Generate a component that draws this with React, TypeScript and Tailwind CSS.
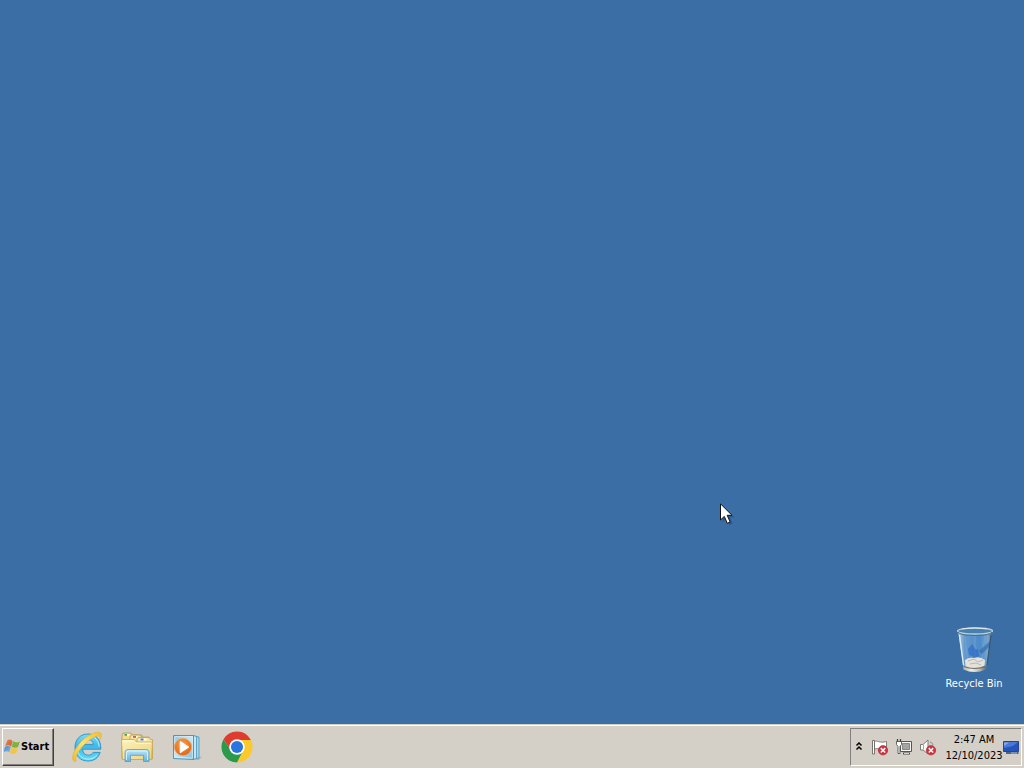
import type { ReactNode } from "react";

function WindowsFlag() {
  return (
    <svg width="16" height="16" viewBox="0 0 16 16" aria-hidden="true">
      <defs>
        <linearGradient id="flagRed" x1="0" y1="0" x2="1" y2="1">
          <stop offset="0" stopColor="#d98a5c" />
          <stop offset="1" stopColor="#dd5520" />
        </linearGradient>
        <linearGradient id="flagBlue" x1="0" y1="0" x2="1" y2="1">
          <stop offset="0" stopColor="#4f86c4" />
          <stop offset="1" stopColor="#7db9ec" />
        </linearGradient>
      </defs>
      <path d="M3.2 1.4C5 .2 6.7.4 8.6 1.9L7 7.4C5.2 6 3.4 6 1.3 7.1Z" fill="url(#flagRed)" />
      <path d="M9.2 2.3C11.2 3.7 13.2 3.6 15.8 2.4L14.1 8C11.6 9.2 9.6 9 7.6 7.7Z" fill="#7fb144" />
      <path d="M1 7.8C3 6.8 4.9 6.8 6.8 8.1L5.3 13.2C3.5 11.9 1.6 11.9-.4 12.9Z" fill="url(#flagBlue)" />
      <path d="M7.4 8.4C9.4 9.8 11.4 9.9 13.9 8.7L12.4 14C10 15.2 7.8 15.1 5.8 13.7Z" fill="#f2c548" />
    </svg>
  );
}

function ExplorerLogo() {
  return (
    <svg width="32" height="32" viewBox="0 0 32 32" aria-hidden="true">
      <defs>
        <linearGradient id="ieBlue" x1="0" y1="0" x2="0" y2="1">
          <stop offset="0" stopColor="#7fdcf7" />
          <stop offset=".45" stopColor="#41b8e8" />
          <stop offset="1" stopColor="#63dcf8" />
        </linearGradient>
        <linearGradient id="ieGold" x1="1" y1="0" x2="0" y2="1">
          <stop offset="0" stopColor="#f0bd2c" />
          <stop offset=".5" stopColor="#fde36c" />
          <stop offset="1" stopColor="#f0b92a" />
        </linearGradient>
      </defs>
      <path
        fillRule="evenodd"
        d="M17 3C25 3 30 8.6 29.8 18.2H11.6C11.9 22 14 24.2 17.4 24.2C19.6 24.2 21.2 23.2 22.1 21.4H29.2C27.3 27 23 30 17 30C9.2 30 4 24.6 4 16.6C4 8.6 9.2 3 17 3ZM11.8 13.4H22.4C22.1 10.3 20.1 8.6 17.2 8.6C14.1 8.6 12.2 10.3 11.8 13.4Z"
        fill="url(#ieBlue)"
        stroke="#2790c4"
        strokeWidth=".9"
      />
      <path d="M23.5 6.6C26.2 8.6 27.9 11.7 28.2 15.8M6.8 21C8.5 25.4 12.2 28 17 28.1C20.9 28.1 24 26.6 26 23.8" fill="none" stroke="#b9f2fd" strokeWidth="1" />
      <path
        d="M28.4 9.6C29.8 5.9 28.6 4.2 25.2 5.2C19.2 7.2 11.2 14.5 7 21.5C4.9 25 4.2 27.7 5.2 30.2C3.1 31.2 1.4 29.7 1.5 26.5C1.7 20.4 8.7 10.5 16.4 5.4C22.4 1.3 28.4-.2 30 2.6C30.9 4.3 30.2 6.8 28.4 9.6Z"
        fill="url(#ieGold)"
        stroke="#dfa92b"
        strokeWidth=".4"
      />
    </svg>
  );
}

function FolderLogo() {
  return (
    <svg width="34" height="32" viewBox="0 0 34 32" aria-hidden="true">
      <defs>
        <linearGradient id="folderFront" x1="0" y1="0" x2="1" y2="1">
          <stop offset="0" stopColor="#fdf3bd" />
          <stop offset="1" stopColor="#ecd27c" />
        </linearGradient>
        <linearGradient id="folderStand" x1="0" y1="0" x2="0" y2="1">
          <stop offset="0" stopColor="#bce6f8" />
          <stop offset="1" stopColor="#64b0dc" />
        </linearGradient>
      </defs>
      <path d="M2 4L3 2H11L12.5 4H22V28H2Z" fill="#f4dc8c" stroke="#b79847" strokeWidth=".8" />
      <path d="M10 6L11 4H20L21.5 6H29V28H10Z" fill="#f6e09a" stroke="#bfa04c" strokeWidth=".8" />
      <path d="M17 8.5L18 6.5H29L30.5 8.5H32.5V28H17Z" fill="#f8e5a5" stroke="#bfa04c" strokeWidth=".8" />
      <rect x="4.5" y="3" width="5" height="1.8" fill="#fff" />
      <rect x="4.5" y="3" width="2.5" height="1.8" fill="#43a15c" />
      <rect x="12.5" y="5" width="5" height="1.8" fill="#fff" />
      <rect x="13" y="5" width="3" height="1.8" fill="#c9603a" />
      <rect x="19.5" y="7.5" width="7" height="2" fill="#fff" />
      <rect x="20.5" y="7.5" width="3" height="2" fill="#4a83c4" />
      <path d="M1.5 8.5H14L16.5 11H32.5L31.5 28.5H2.5Z" fill="url(#folderFront)" stroke="#c8a754" strokeWidth=".8" />
      <path d="M3 9.8H13.5L16 12.2H31" fill="none" stroke="#fffbe0" strokeWidth="1" />
      <path d="M5 22C5 19.5 6 18.5 8.5 18.5H25.5C28 18.5 29 19.5 29 22V30.5H23.5V24.3H10.5V30.5H5Z" fill="url(#folderStand)" stroke="#559ac4" strokeWidth=".8" />
      <path d="M6.4 29V22Q6.4 20 8.7 20H25.3Q27.6 20 27.6 22V29" fill="none" stroke="#e1f6fe" strokeWidth=".9" />
    </svg>
  );
}

function MediaPlayerLogo() {
  return (
    <svg width="32" height="32" viewBox="0 0 32 32" aria-hidden="true">
      <defs>
        <linearGradient id="mediaPanel" x1="0" y1="0" x2="1" y2="1">
          <stop offset="0" stopColor="#8dc3df" />
          <stop offset=".5" stopColor="#c5e4f1" />
          <stop offset="1" stopColor="#7db9d9" />
        </linearGradient>
        <radialGradient id="mediaOrange" cx=".45" cy=".35" r=".7">
          <stop offset="0" stopColor="#fba04b" />
          <stop offset="1" stopColor="#dd600f" />
        </radialGradient>
      </defs>
      <path d="M24 28.5L31.5 25L28 29Z" fill="#b5b2aa" />
      <path d="M23 5L28 6V27L23 28Z" fill="#a7d6eb" stroke="#4b94bb" strokeWidth=".8" />
      <path d="M22 4.5L25.5 5.4V27.6L22 28.5Z" fill="#c4e7f5" stroke="#4b94bb" strokeWidth=".8" />
      <path d="M2.5 4.5H22.5V28.5L2.5 27.5Z" fill="url(#mediaPanel)" stroke="#4d97bc" strokeWidth="1" />
      <path d="M3.7 5.7H21.3V27.2L3.7 26.3Z" fill="none" stroke="#e6f7fc" strokeWidth=".7" />
      <circle cx="12" cy="16" r="8.6" fill="url(#mediaOrange)" stroke="#eba467" strokeWidth=".8" />
      <path d="M9.2 10.4L17.8 16L9.2 21.8Z" fill="#fff" stroke="#fff" strokeWidth="1" strokeLinejoin="round" />
    </svg>
  );
}

function ChromeLogo() {
  return (
    <svg width="34" height="34" viewBox="0 0 48 48" aria-hidden="true">
      <path d="M24 14H43.6A22 22 0 0 0 4.95 13L15.34 29A10 10 0 0 1 24 14Z" fill="#df3c30" />
      <path d="M24 14H43.6A22 22 0 0 1 24 46L32.66 29A10 10 0 0 0 24 14Z" fill="#fbc92b" />
      <path d="M15.34 29L4.95 13A22 22 0 0 0 24 46L32.66 29A10 10 0 0 1 15.34 29Z" fill="#2b9a4a" />
      <circle cx="24" cy="24" r="11" fill="#fff" />
      <circle cx="24" cy="24" r="8.6" fill="#2a74e0" />
    </svg>
  );
}

function RedCross({ x, y }: { x: number; y: number }) {
  return (
    <g>
      <circle cx={x} cy={y} r="4.7" fill="#cf3340" stroke="#a92631" strokeWidth=".6" />
      <path d={`M${x - 2.2} ${y - 2.2}l4.4 4.4m0-4.4l-4.4 4.4`} stroke="#fff" strokeWidth="1.5" />
    </g>
  );
}

function ActionCenterIcon() {
  return (
    <svg width="18" height="18" viewBox="0 0 18 18" aria-hidden="true">
      <path d="M3.5 3.5C6 2 8.5 5.5 15.5 3.5V11C10 12.5 7.5 9.5 3.5 11Z" fill="#fff" stroke="#76746f" strokeWidth=".9" />
      <path d="M1.5 2.5H3.5V16H1.5Z" fill="#fff" stroke="#696762" strokeWidth=".9" />
      <RedCross x={12} y={12.3} />
    </svg>
  );
}

function NetworkIcon() {
  return (
    <svg width="18" height="18" viewBox="0 0 18 18" aria-hidden="true">
      <path d="M5.5 3.5H16.5V13.5H5.5Z" fill="#f5f5f3" stroke="#555553" />
      <path d="M7.5 5.5H14.5V11.5H7.5Z" fill="#a5a6a4" stroke="#737573" strokeWidth=".8" />
      <path d="M8 15.5H15" stroke="#4c4c4a" strokeWidth="2" />
      <path d="M9 15.5H14" stroke="#f0f0ee" strokeWidth=".8" />
      <path d="M1.5 3.5H6.5V6.5L5 8.5V15.5H3V8.5L1.5 6.5Z" fill="#fff" stroke="#555652" strokeWidth=".9" />
      <path d="M2.5 1V4M5.5 1V4" stroke="#444541" strokeWidth="1.3" />
    </svg>
  );
}

function SpeakerIcon() {
  return (
    <svg width="18" height="18" viewBox="0 0 18 18" aria-hidden="true">
      <path d="M1.5 6.5H4L9 2V16L4 12H1.5Z" fill="#f8f8f7" stroke="#71716d" strokeWidth=".9" />
      <path d="M4.5 7V11.5" stroke="#a8a8a3" />
      <path d="M11 4C12.9 4.5 13.9 5.7 14 7" fill="none" stroke="#8a8984" />
      <RedCross x={12} y={12.3} />
    </svg>
  );
}

function ShowDesktopIcon() {
  return (
    <svg width="16" height="16" viewBox="0 0 16 16" aria-hidden="true">
      <path d="M.5 2.5H15.5V12.5H.5Z" fill="#2454bd" stroke="#27458d" />
      <path d="M1 3H15L10 7L1 9Z" fill="#4d79d6" />
      <path d="M1 3.5H6L1 7Z" fill="#86a8ea" />
      <path d="M3 13H15.5V15H3Z" fill="#53657e" />
      <path d="M8 14H14" stroke="#a9bdd5" />
    </svg>
  );
}

function RecycleBinIcon() {
  return (
    <svg width="48" height="48" viewBox="0 0 48 48" aria-hidden="true">
      <defs>
        <linearGradient id="binGlass" x1="0" y1="0" x2="1" y2="0">
          <stop offset="0" stopColor="#c4dcec" stopOpacity=".9" />
          <stop offset=".2" stopColor="#6da3d6" stopOpacity=".8" />
          <stop offset=".65" stopColor="#528fcf" stopOpacity=".85" />
          <stop offset=".88" stopColor="#86b4dc" stopOpacity=".8" />
          <stop offset="1" stopColor="#4a6d8e" />
        </linearGradient>
        <linearGradient id="binBase" x1="0" y1="0" x2="1" y2="0">
          <stop offset="0" stopColor="#a7aeaa" />
          <stop offset=".35" stopColor="#f0f0e8" />
          <stop offset=".7" stopColor="#bbbeb8" />
          <stop offset="1" stopColor="#586471" />
        </linearGradient>
      </defs>
      <path d="M8 5L13.5 43Q25 48 36 43L42 5Q25 10 8 5Z" fill="url(#binGlass)" />
      <path d="M15 11L18 38M25 9V34M35 10L31 38" stroke="#76aadb" strokeWidth="1" opacity=".6" />
      <path d="M18 23L22 18L26 24L24 31L19 29ZM23 25L28 23L29 30L24 33Z" fill="#2b69c6" opacity=".65" />
      <path d="M40 15L29 25L32 28L39 21Z" fill="#2d64a3" opacity=".6" />
      <path d="M15 34Q19 31 24 32Q30 30 35 34L34.5 41Q25 45 15.5 41Z" fill="#e4e2da" />
      <path d="M18 35L24 33L28 36L33 34M20 38L26 37L31 39" fill="none" stroke="#b5b9b7" />
      <path d="M13 39Q24.5 44 36.5 39L36 43.5Q24 48.5 13.5 43.5Z" fill="url(#binBase)" />
      <path d="M13.5 40.5Q24.5 44.5 36 40.5" stroke="#706e65" strokeWidth="1.2" fill="none" />
      <path d="M9.5 9L13.5 39" stroke="#d9e9f0" strokeWidth="1.4" />
      <path d="M41 9L37 39" stroke="#38576e" strokeWidth="1.2" />
      <ellipse cx="25" cy="5" rx="17.5" ry="3" fill="#477fae" stroke="#b9ced6" strokeWidth="1.3" />
      <path d="M8 6Q10 9.5 25 9.5Q40 9.5 42 6" fill="none" stroke="#546d7a" />
      <path d="M12 2.8Q24 1 37 2.8" fill="none" stroke="#e1e9e7" />
    </svg>
  );
}

function Cursor() {
  return (
    <svg className="absolute left-[720px] top-[503px]" width="16" height="24" viewBox="0 0 16 24" aria-hidden="true">
      <path d="M2.5 2.5V19.5L6.5 15.5L9.5 22L12.5 20.5L9.8 14.5H14.5Z" fill="#173653" opacity=".35" />
      <path d="M.5.8V17L4.3 13.4L7.3 20.3L10.2 19L7.2 12.3H12Z" fill="#fff" stroke="#111" strokeWidth="1" />
    </svg>
  );
}

function QuickLaunch({ label, children }: { label: string; children: ReactNode }) {
  return (
    <button type="button" aria-label={label} className="flex h-10 w-[50px] items-center justify-center">
      {children}
    </button>
  );
}

function Taskbar() {
  return (
    <footer className="flex h-11 shrink-0 border-t border-[#d4d0c8] bg-[#d4d0c8] text-black">
      <div className="flex min-w-0 grow border-t border-white px-0.5 pt-0.5 pb-0.5">
        <button
          type="button"
          className="flex w-[52px] items-center gap-px border border-t-white border-r-[#404040] border-b-[#404040] border-l-white pl-px text-[11px] font-bold shadow-[inset_-1px_-1px_0_#808080]"
        >
          <WindowsFlag />
          <span>Start</span>
        </button>
        <nav aria-label="Quick launch" className="ml-2 flex grow items-center">
          <QuickLaunch label="Internet Explorer"><ExplorerLogo /></QuickLaunch>
          <QuickLaunch label="Windows Explorer"><FolderLogo /></QuickLaunch>
          <QuickLaunch label="Windows Media Player"><MediaPlayerLogo /></QuickLaunch>
          <QuickLaunch label="Google Chrome"><ChromeLogo /></QuickLaunch>
        </nav>
        <div className="flex w-[172px] items-center border border-t-[#808080] border-r-white border-b-white border-l-[#808080]">
          <button type="button" aria-label="Show hidden icons" className="flex h-6 w-4 items-center justify-center">
            <svg width="8" height="10" viewBox="0 0 8 10" aria-hidden="true">
              <path d="M1.5 3.5L4 1L6.5 3.5M1.5 7.5L4 5L6.5 7.5" fill="none" stroke="#000" strokeWidth="1.5" />
            </svg>
          </button>
          <div className="ml-1 flex gap-1.5">
            <button type="button" aria-label="Action Center"><ActionCenterIcon /></button>
            <button type="button" aria-label="Network"><NetworkIcon /></button>
            <button type="button" aria-label="Volume"><SpeakerIcon /></button>
          </div>
          <button type="button" className="ml-2 w-[58px] pt-0.5 text-center text-[11px] leading-4">
            <time dateTime="2023-12-10T02:47">2:47 AM<br />12/10/2023</time>
          </button>
          <button type="button" aria-label="Show desktop"><ShowDesktopIcon /></button>
        </div>
      </div>
    </footer>
  );
}

export default function App() {
  return (
    <div className="relative flex min-h-screen cursor-default flex-col overflow-hidden bg-[#3a6ea5] font-['Tahoma','DejaVu_Sans_Condensed','Noto_Sans',sans-serif]">
      <main className="flex grow items-end justify-end pr-3 pb-8">
        <button type="button" className="flex w-[76px] flex-col items-center gap-0.5 text-[11px] leading-4 text-white">
          <RecycleBinIcon />
          <span>Recycle Bin</span>
        </button>
      </main>
      <Taskbar />
      <Cursor />
    </div>
  );
}
